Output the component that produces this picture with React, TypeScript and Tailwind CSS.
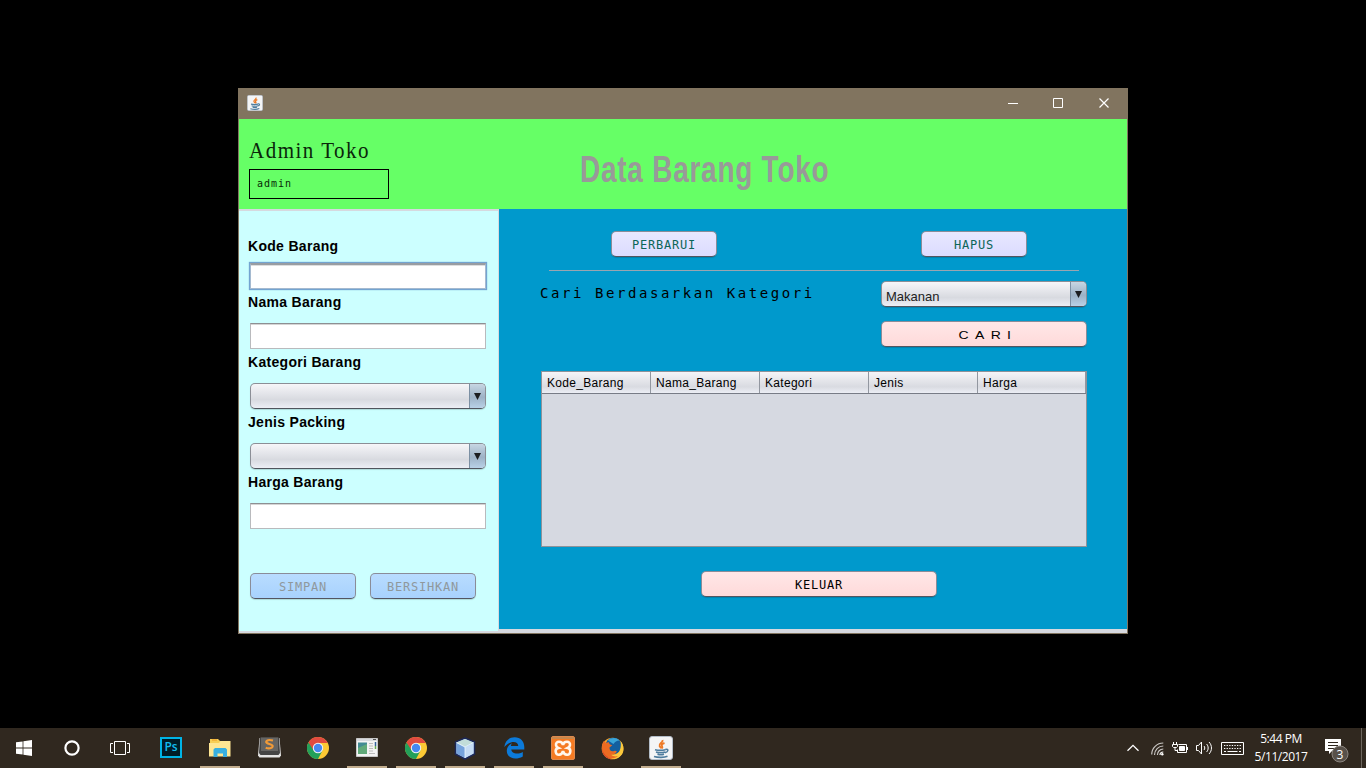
import React from "react";

const sans = "font-['Liberation_Sans',sans-serif]";
const mono = "font-['DejaVu_Sans_Mono',monospace]";

function JavaIcon({ size }: { size: number }) {
  return (
    <svg width={size} height={size} viewBox="0 0 24 24">
      <rect x="0.5" y="0.5" width="23" height="23" rx="2.5" fill="#f4f5f6" stroke="#b3bdc8" />
      <path d="M13.600 4c.6 2.700-4.200 3.400-3 6 .4.800 1.400 1.600 1.800 2.300M15.500 7c-2.800 1-3.200 2.200-2.400 3.300.6.900.3 1.600-.5 2.200" fill="none" stroke="#ee7b27" strokeWidth="1.900" />
      <path d="M6 13.700c3 .8 7.500.8 10.500 0M7 16c2.500.9 6.500.9 9 0M8.500 18.200c2 .7 4.500.7 6.500 0M16.500 13.300c3.400-.6 3 2.700-.5 3.300M5 20.500c4 1.200 10.500 1.100 13.500-.2" fill="none" stroke="#4f7d9e" strokeWidth="1.600" />
    </svg>
  );
}

function ChromeIcon() {
  return (
    <svg width="22" height="22" viewBox="0 0 22 22">
      <circle cx="11" cy="11" r="11" fill="#fcc934" />
      <path d="M11 11 1.470 5.500A11 11 0 0 0 11 22l4.500-8.500z" fill="#23a05a" />
      <path d="M11 11 6.700 13.500 1.470 5.500A11 11 0 0 1 20.700 6H11z" fill="#e04b40" />
      <circle cx="11" cy="11" r="5.200" fill="#f3f4f5" />
      <circle cx="11" cy="11" r="4.200" fill="#4688f1" />
    </svg>
  );
}

function PhotoshopIcon() {
  return (
    <div className="mb-0.5 flex h-[21px] w-[22px] items-center justify-center border-2 border-[#00b4e6] bg-[#001d28] pb-px font-['Open_Sans',sans-serif] text-[12px] font-semibold leading-none text-[#12bdf0]">
      Ps
    </div>
  );
}

function FolderIcon() {
  return (
    <svg width="22" height="20" viewBox="0 0 22 20">
      <path d="M1 1h8l2 2h9.500v15H1z" fill="#f7cf57" />
      <path d="M3 2h5" stroke="#f09a23" />
      <path d="M1 5h9l1.500-2H21.500v15.500H0V5z" fill="#fee693" />
      <path d="M4.500 19v-7.500l1.500-1.500h10.500l1.500 1.500V19h-4v-3.500H8.500V19z" fill="#38afe0" />
    </svg>
  );
}

function SublimeIcon() {
  return (
    <svg className="mb-0.5" width="23" height="21" viewBox="0 0 23 21">
      <path d="M1.500 1h20L23 18.500 21.500 20.500h-20L0 18.500z" fill="#e4e4e4" />
      <path d="M2 .5h19l1 15.500-1.500 2h-18L1 16z" fill="#444" />
      <path d="M3 .5h17v13.500H3z" fill="#666563" />
      <path d="M15 3.500C11 2.300 8 3.200 8.200 5.200s6.700 1.700 6.500 4-4.200 2.700-7 1.500" fill="none" stroke="#f29b38" strokeWidth="2.100" />
    </svg>
  );
}

function WindowAppIcon() {
  return (
    <svg className="mb-px mr-px" width="22" height="19" viewBox="0 0 22 19">
      <path d="M.5.5h21v18H.5z" fill="#f3f3f3" stroke="#c8c8c8" />
      <path d="M1 1h20v2H1z" fill="#d8dade" />
      <path d="M17 1.500h3" stroke="#555" />
      <path d="M2 4.500h9V16H2z" fill="#438b93" />
      <path d="M2 16V10l9-4v10z" fill="#61a979" />
      <path d="M13 5.500h4M13 8h4M13 10.500h4M13 13h4M13 15.500h6" stroke="#bbb" />
      <path d="M19.500 4v4" stroke="#34629e" strokeWidth="1.500" />
      <path d="M19.500 8v3" stroke="#67ad54" strokeWidth="1.500" />
    </svg>
  );
}

function CubeIcon() {
  return (
    <svg width="22" height="23" viewBox="0 0 22 23">
      <path d="M11 1 20.500 5v12L11 22 1.500 17V5z" fill="#a8c8ec" stroke="#1c2858" strokeWidth="1.600" />
      <path d="m11 2 8.500 3.500L11 10 2.500 5.500z" fill="#c2ddd9" />
      <path d="m2.500 6 8.500 4.500V21l-8.500-4.500z" fill="#76a3dc" />
      <path d="m11 10.500 8.500-4.500v10.500L11 21z" fill="#c5dcf4" />
      <path d="M11 10v11M2.500 5.500 11 10l8.500-4.500" fill="none" stroke="#eef7ff" strokeWidth=".8" />
    </svg>
  );
}

function EdgeIcon() {
  return (
    <svg width="21" height="22" viewBox="0 0 21 22">
      <path d="M.3 10C1.200 4 5.200.3 10.700.3 16.500.3 20.300 4.500 20.300 10v2.400H7.300c.3 4.200 6.500 5.300 11.500 2.500v4.600C11.500 23.500 3 21.500 2.800 14 2.700 10.500 4.800 7.700 8 6.200 7.300 7 7 8 6.900 9h7.300c.4-5.500-8.600-5.800-13.900 1z" fill="#0c7ad9" />
    </svg>
  );
}

function XamppIcon() {
  return (
    <svg width="24" height="24" viewBox="0 0 24 24">
      <rect x=".5" y=".5" width="23" height="23" rx="1.500" fill="#f57b23" stroke="#dd894d" />
      <path d="M1 1h22v2H1z" fill="#c7884d" />
      <path d="M12 9C11 4.500 4.500 5 5 9c.2 1.800 1.200 2.500 2.300 3C3 13 4.500 19 8 18.800c2.500-.2 3.500-1.500 4-3.800.5 2.300 1.500 3.600 4 3.800 3.500.2 5-5.800.7-6.800 1.100-.5 2.100-1.200 2.300-3 .5-4-6-4.500-7 0z" fill="none" stroke="#fff7ed" strokeWidth="2.600" />
    </svg>
  );
}

function FirefoxIcon() {
  return (
    <svg width="23" height="23" viewBox="0 0 23 23">
      <circle cx="11.500" cy="11.500" r="10.800" fill="#f6a52d" />
      <circle cx="12.500" cy="9" r="8.300" fill="#135f9f" />
      <path d="M7 3.500c3.500-3.500 9-3 11.500 0-3 0-4.500 1.500-6 3.500z" fill="#3aa5d8" />
      <path d="M19.500 4c4 4.500 4 11 .5 14.500-4 4.500-11 4.500-15 1l6-1.500c6 .5 10-5 8.500-14z" fill="#fbc83c" />
      <path d="M1 11C.7 8 1.500 5.500 3 3.700L4.500 5.700 8 5.300c0 1.700 1 2.500 3.300 3L8.500 10.500c-.3 2.800 2 4.500 4.500 3.500 1.500-.6 2.500 0 2.800.6C14.500 17 12 18 10 17.800c2 1.800 5 2 7 1.200-5 5-15.500 2.500-16-8z" fill="#ec6b22" />
      <path d="M1 10.500c.5 6 5 10.500 11 11.700C5.500 22.800.5 17.500 1 10.500z" fill="#d5402b" />
    </svg>
  );
}

function TaskSlot({ running = false, children }: { running?: boolean; children: React.ReactNode }) {
  return (
    <div className="flex h-10 w-[49px] shrink-0 flex-col pl-[5px]">
      <div className="flex h-[38px] w-10 items-center justify-center pt-0.5">{children}</div>
      <div className={running ? "h-0.5 w-10 bg-[#c2ad8e]" : "h-0.5 w-10"} />
    </div>
  );
}

function Taskbar() {
  return (
    <footer className="flex h-10 w-full shrink-0 bg-[#30281f] text-white">
      <div className="flex h-10 w-12 items-center justify-center">
        <svg width="16" height="16" viewBox="0 0 16 16" fill="#fff">
          <path d="M0 2.300 6.600 1.400v6.100H0zM7.400 1.200 16 0v7.500H7.400zM0 8.400h6.600v6.200L0 13.700zM7.400 8.400H16V16l-8.600-1.200z" />
        </svg>
      </div>
      <div className="flex h-10 w-12 items-center justify-center">
        <svg width="16" height="16" viewBox="0 0 16 16">
          <circle cx="8" cy="8" r="6.600" fill="none" stroke="#fff" strokeWidth="2.200" />
        </svg>
      </div>
      <div className="flex h-10 w-[50px] items-center pl-[14px]">
        <svg width="20" height="14" viewBox="0 0 20 14" fill="none" stroke="#fff">
          <path d="M4.500.5h11v13h-11zM3 2.500H.5v9H3M17 2.500h2.500v9H17" />
        </svg>
      </div>
      <TaskSlot><PhotoshopIcon /></TaskSlot>
      <TaskSlot running><FolderIcon /></TaskSlot>
      <TaskSlot><SublimeIcon /></TaskSlot>
      <TaskSlot><ChromeIcon /></TaskSlot>
      <TaskSlot running><WindowAppIcon /></TaskSlot>
      <TaskSlot running><ChromeIcon /></TaskSlot>
      <TaskSlot running><CubeIcon /></TaskSlot>
      <TaskSlot running><EdgeIcon /></TaskSlot>
      <TaskSlot running><XamppIcon /></TaskSlot>
      <TaskSlot><FirefoxIcon /></TaskSlot>
      <TaskSlot running><JavaIcon size={24} /></TaskSlot>

      <div className="ml-auto flex h-10 items-center">
        <svg className="mr-[12px]" width="12" height="8" viewBox="0 0 12 8" fill="none" stroke="#fff" strokeWidth="1.300">
          <path d="M.5 6.800 6 1.300l5.500 5.500" />
        </svg>
        <svg className="mr-2 mt-0.5" width="13" height="14" viewBox="0 0 13 14" fill="none">
          <path d="M.7 12.500C.7 6 6 1 12.300 1M3.500 13C3.500 8 7.500 4 12.300 4M6.400 13c0-3.400 2.600-6 5.900-6" stroke="#c9c6c3" strokeWidth="1.200" />
          <path d="M9 13c0-2 1.400-3 3.300-3" stroke="#fff" strokeWidth="1.200" />
          <circle cx="11.300" cy="12.300" r="1.200" fill="#fff" />
        </svg>
        <svg className="mr-2" width="16" height="12" viewBox="0 0 16 12" fill="none" stroke="#fff">
          <path d="M6.500 2.500h8v8h-9v-3M15.500 5v3" />
          <path d="M7.500 4.500h5v4h-5z" fill="#fff" />
          <path d="M1.500 0v2M4.500 0v2M.5 2.500h5v2l-1 1h-3l-1-1zM3 6v2.500h3" />
        </svg>
        <svg className="mr-2" width="17" height="14" viewBox="0 0 17 14" fill="none" stroke="#fff">
          <path d="M.5 4.500h2l3-3.500v12l-3-3.500h-2zM8 5c1 1 1 3 0 4M10.500 3c2.200 2 2.200 6 0 8M13 1c3.300 3.400 3.300 8.600 0 12" />
        </svg>
        <svg width="23" height="13" viewBox="0 0 23 13" fill="none" stroke="#fff">
          <path d="M.5.5h22v12H.5z" />
          <path d="M3 3.500h17M3 6.500h17" strokeDasharray="1.300 1.300" />
          <path d="M3 9.500h2M6.500 9.500h10M18 9.500h2" />
        </svg>
        <div className="ml-[10px] flex w-[54px] flex-col items-center whitespace-nowrap font-['Open_Sans',sans-serif] text-[12px] leading-[18px] tracking-[-0.45px]">
          <span>5:44 PM</span>
          <span>5/11/2017</span>
        </div>
        <svg className="ml-4 mt-[3px]" width="26" height="26" viewBox="0 0 26 26">
          <path d="M1 2h16v12h-9l-3 3v-3H1z" fill="#fff" />
          <path d="M4 5.500h10M4 8.500h10M4 11.500h7" stroke="#30281f" />
          <circle cx="16" cy="17" r="8" fill="#58514a" stroke="#8a847e" />
          <text x="16" y="21.500" fill="#fff" fontFamily="Open Sans, sans-serif" fontSize="12" textAnchor="middle">3</text>
        </svg>
        <div className="ml-[11px] mr-1 h-10 w-px bg-[#6c655d]" />
      </div>
    </footer>
  );
}

function Button({ look, children }: { look: string; children: React.ReactNode }) {
  return (
    <button
      className={
        "flex h-[26px] shrink-0 items-center justify-center rounded-[5px] border border-[#8a8c98] border-b-[#535560] pt-0.5 shadow-[0_1px_1px_rgba(0,0,0,0.15)] " + look
      }
    >
      {children}
    </button>
  );
}

function Combo({ width, value = "" }: { width: string; value?: string }) {
  return (
    <div
      className={
        "flex h-[26px] shrink-0 overflow-hidden rounded-[5px] border border-[#8b8e96] border-b-[#50545d] bg-linear-to-b from-[#f6f6f9] via-[#d8dae0] via-65% to-[#eceef5] shadow-[0_1px_1px_rgba(0,0,0,0.15)] " + width
      }
    >
      <span className={"flex-1 pl-1 pt-[7px] text-[13px] leading-[15px] text-[#222] " + sans}>{value}</span>
      <span className="flex w-4 justify-center border-l border-[#7b8fa3] bg-linear-to-b from-[#c7d6e3] via-[#9db2c6] via-55% to-[#b9d1e7] pt-[9px]">
        <svg width="7" height="7" viewBox="0 0 7 7">
          <path d="M0 0h7L3.500 7z" fill="#1c1e21" />
        </svg>
      </span>
    </div>
  );
}

function Field({ focused = false }: { focused?: boolean }) {
  return focused ? (
    <div className="-ml-px h-7 w-[238px] border border-[#73a4d1] shadow-[0_0_1px_#73a4d1]">
      <div className="h-full w-full border border-t-2 border-[#a5bad0] border-t-[#999da2] bg-white shadow-[inset_0_1px_0_#dedede]" />
    </div>
  ) : (
    <div className="h-[26px] w-[236px] border border-[#b9babd] border-t-[#8d8f92] bg-white shadow-[inset_0_1px_0_#d5d5d5]" />
  );
}

function Label({ children }: { children: React.ReactNode }) {
  return <div className={"-ml-0.5 h-5 text-[14px] font-bold leading-5 tracking-[0.3px] text-black " + sans}>{children}</div>;
}

const columns = ["Kode_Barang", "Nama_Barang", "Kategori", "Jenis", "Harga"];

export default function App() {
  return (
    <div className="flex h-[768px] w-[1366px] flex-col overflow-hidden bg-black">
      <div className="flex flex-1 items-start pl-[238px] pt-[88px]">
        <main className="flex h-[546px] w-[890px] flex-col border border-[#81745f] bg-[#d6d9df]">
          <div className="flex h-[30px] shrink-0 items-center bg-[#81745f] pb-0.5 pl-2">
            <JavaIcon size={16} />
            <svg className="ml-auto mr-[18px]" width="102" height="12" viewBox="0 0 102 12" fill="none" stroke="#fff">
              <path d="M1 6.500h10M46.500 1.500h9v9h-9z" />
              <path d="m92.500 1.500 9 9M101.500 1.500l-9 9" strokeWidth="1.200" />
            </svg>
          </div>

          <header className="flex h-[90px] shrink-0 bg-[#66ff66] pl-[10px]">
            <div className="flex w-[331px] flex-col pt-[18px]">
              <div className="h-8 origin-left scale-x-[0.875] whitespace-nowrap font-['Liberation_Serif',serif] text-[24px] leading-[26px] tracking-[1.7px] text-[#0a260a]">
                Admin Toko
              </div>
              <div className={"flex h-[30px] w-[140px] items-center border border-black pl-[7px] text-[10px] leading-none tracking-[1px] text-[#062a06] " + mono}>
                admin
              </div>
            </div>
            <h1 className={"origin-left scale-x-[0.756] whitespace-nowrap pt-[26px] text-[37px] font-bold leading-[50px] tracking-[1px] text-[#999999] " + sans}>
              Data Barang Toko
            </h1>
          </header>

          <div className="flex h-[424px]">
            <section className="mb-0.5 mt-0.5 mr-px flex w-[259px] shrink-0 flex-col bg-[#ccffff] pl-[11px] pt-[25px]">
              <Label>Kode Barang</Label>
              <div className="pb-0.5 pt-1.5"><Field focused /></div>
              <Label>Nama Barang</Label>
              <div className="pb-[3px] pt-[11px]"><Field /></div>
              <Label>Kategori Barang</Label>
              <div className="pb-[3px] pt-[11px]"><Combo width="w-[236px]" /></div>
              <Label>Jenis Packing</Label>
              <div className="pb-[3px] pt-[11px]"><Combo width="w-[236px]" /></div>
              <Label>Harga Barang</Label>
              <div className="pt-[11px]"><Field /></div>
              <div className={"flex gap-[14px] pt-[44px] text-[12px] tracking-[0.78px] text-[#8f989c] " + mono}>
                <Button look="w-[106px] bg-linear-to-b from-[#b8dcff] to-[#a8d2fd]">SIMPAN</Button>
                <Button look="w-[106px] bg-linear-to-b from-[#b8dcff] to-[#a8d2fd]">BERSIHKAN</Button>
              </div>
            </section>

            <section className="mb-1 flex w-[628px] flex-col bg-[#0099cc] pl-[42px] pr-10 pt-[22px]">
              <div className={"flex justify-between pl-[70px] pr-[60px] text-[12px] tracking-[0.78px] text-[#0b6658] " + mono}>
                <Button look="w-[106px] bg-linear-to-b from-[#e8e8ff] to-[#dcdcff]">PERBARUI</Button>
                <Button look="w-[106px] bg-linear-to-b from-[#e8e8ff] to-[#dcdcff]">HAPUS</Button>
              </div>
              <div className="ml-2 mr-2 mt-[13px] h-px bg-[#9aa5b0]" />
              <div className="flex justify-between pt-[10px]">
                <div className={"-ml-px whitespace-nowrap pt-0.5 text-[14px] leading-5 tracking-[2.56px] text-black " + mono}>
                  Cari Berdasarkan Kategori
                </div>
                <Combo width="w-[206px]" value="Makanan" />
              </div>
              <div className={"flex justify-end pt-[14px] text-[11px] " + sans}>
                <Button look="w-[206px] bg-linear-to-b from-[#ffe7e7] to-[#ffdada]">
                  <span className="scale-x-[1.27] pl-[6px] tracking-[5px]">CARI</span>
                </Button>
              </div>
              <div className="mt-6 flex h-[176px] w-[546px] flex-col border border-[#8e9299] bg-[#d6d9e1]">
                <div className={"flex h-[22px] overflow-hidden border-b border-[#787c86] bg-linear-to-b from-[#f5f5f8] via-[#d9dbe1] via-70% to-[#eceef5] text-[12px] leading-[22px] tracking-[0.3px] text-black " + sans}>
                  {columns.map((name, i) => (
                    <div key={name} className={(i === 4 ? "w-[108px]" : "w-[109px]") + " shrink-0 border-r border-[#9297a0] pl-[5px]"}>
                      {name}
                    </div>
                  ))}
                </div>
              </div>
              <div className={"flex pl-[160px] pt-6 text-[12px] tracking-[0.78px] text-black " + mono}>
                <Button look="w-[236px] bg-linear-to-b from-[#ffe7e7] to-[#ffdada]">KELUAR</Button>
              </div>
            </section>
          </div>
        </main>
      </div>
      <Taskbar />
    </div>
  );
}
